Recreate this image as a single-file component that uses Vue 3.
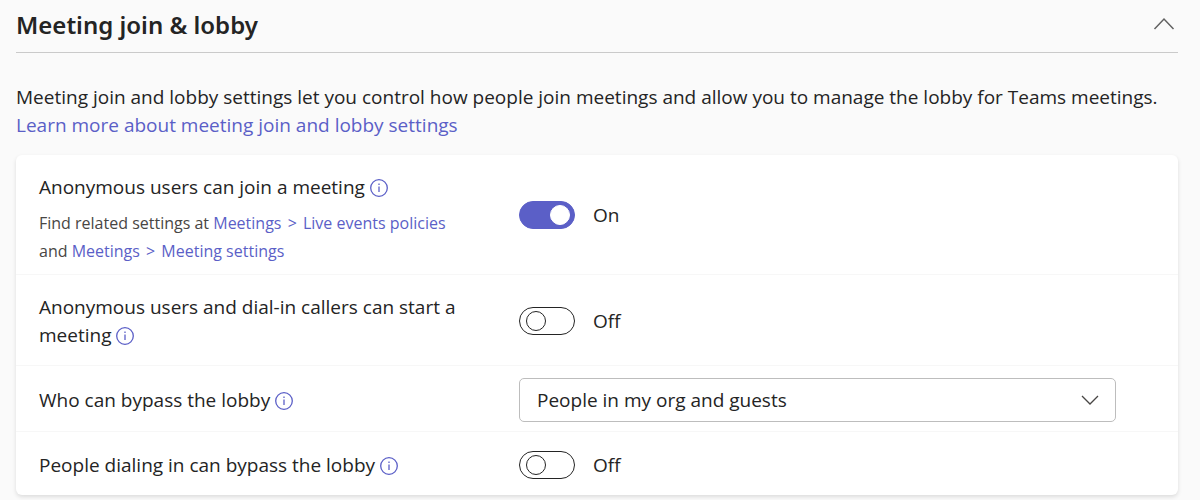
<script setup>
import { ref } from 'vue'

const expanded = ref(true)
const bypass = ref('org-guests')
const rows = ref([
  {
    id: 'anon-join',
    label: 'Anonymous users can join a meeting',
    type: 'switch',
    on: true,
    related: true
  },
  { id: 'anon-start', label: 'Anonymous users and dial-in callers can start a meeting', type: 'switch', on: false },
  { id: 'bypass', label: 'Who can bypass the lobby', type: 'select' },
  { id: 'dial-bypass', label: 'People dialing in can bypass the lobby', type: 'switch', on: false }
])
</script>

<template>
  <main class="panel">
    <header class="header">
      <h2 class="title">Meeting join &amp; lobby</h2>
      <button
        class="collapse"
        type="button"
        aria-label="Toggle section"
        :aria-expanded="expanded"
        @click="expanded = !expanded"
      >
        <svg width="22" height="14" viewBox="0 0 22 14" aria-hidden="true">
          <path d="M1.5 12 L11 2 L20.500 12" />
        </svg>
      </button>
    </header>

    <template v-if="expanded">
      <p class="intro">
        Meeting join and lobby settings let you control how people join meetings and allow you to manage the lobby for
        Teams meetings. <a class="more" href="#">Learn more about meeting join and lobby settings</a>
      </p>

      <section class="card">
        <div v-for="row in rows" :key="row.id" class="row" :class="'row-' + row.type">
          <div class="text">
            <div class="name">
              <label :for="row.id">{{ row.label }}</label>&nbsp;<button class="info" type="button" :aria-label="'About: ' + row.label">
                <svg width="18" height="18" viewBox="0 0 18 18" aria-hidden="true">
                  <circle cx="9" cy="9" r="8.300" />
                  <path d="M9 7.600 V13" />
                  <path d="M9 4.500 V6" />
                </svg>
              </button>
            </div>
            <p v-if="row.related" class="related">
              Find related settings at <a href="#">Meetings <span class="sep">&gt;</span> Live events policies</a> and
              <a href="#">Meetings <span class="sep">&gt;</span> Meeting settings</a>
            </p>
          </div>

          <div v-if="row.type === 'switch'" class="control">
            <input :id="row.id" v-model="row.on" class="switch" type="checkbox" role="switch" />
            <span class="state">{{ row.on ? 'On' : 'Off' }}</span>
          </div>
          <div v-else class="control dropdown">
            <select :id="row.id" v-model="bypass">
              <option value="org-guests">People in my org and guests</option>
            </select>
            <svg class="chevron" width="18" height="10" viewBox="0 0 18 10" aria-hidden="true">
              <path d="M1 1 L9 9 L17 1" />
            </svg>
          </div>
        </div>
      </section>
    </template>
  </main>
</template>

<style>
html {
  background: #fafafa;
}
</style>

<style scoped>
.panel {
  padding: 0 22px 5px 16px;
  color: #242424;
  font-family: 'Open Sans', 'Noto Sans', sans-serif;
  font-size: 19px;
  line-height: 28px;
}

a {
  color: #5b5fc7;
  text-decoration: none;
}

button {
  padding: 0;
  border: 0;
  background: none;
  cursor: pointer;
}

.header {
  display: flex;
  align-items: center;
  justify-content: space-between;
  height: 52px;
  padding-right: 3px;
  border-bottom: 1px solid #cacaca;
}

.title {
  margin: 0;
  padding-bottom: 2px;
  font-family: 'Noto Sans', 'Open Sans', sans-serif;
  font-size: 24px;
  font-weight: 600;
  line-height: 36px;
}

.collapse {
  padding-bottom: 4px;
}

.collapse svg {
  display: block;
  fill: none;
  stroke: #616161;
  stroke-width: 1.5;
}

.intro {
  margin: 30px 0 16px;
}

.more {
  display: block;
}

.card {
  border-radius: 6px;
  background: #fff;
  box-shadow: 0 2px 4px rgba(0, 0, 0, 0.12);
}

.row {
  display: grid;
  grid-template-columns: 424px 1fr;
  column-gap: 56px;
  align-items: center;
  padding: 18px 62px 16px 23px;
  border-bottom: 1px solid #f7f7f7;
}

.row:first-child {
  padding-top: 9px;
  padding-bottom: 9px;
}

.row:first-child .text {
  padding-top: 9px;
}

.row:last-child {
  padding-top: 19px;
  border-bottom: 0;
}

.row-select {
  padding-top: 12px;
  padding-bottom: 9px;
}

.info {
  display: inline-block;
  height: 18px;
  line-height: 18px;
  vertical-align: -3px;
}

.info svg {
  display: block;
  fill: none;
  stroke: #5b5fc7;
  stroke-width: 1.3;
}

.related {
  margin: 8px 0 0;
  color: #484644;
  font-size: 16px;
}

.sep {
  padding: 0 2px;
}

.control {
  display: flex;
  align-items: center;
  gap: 18px;
}

.switch {
  display: flex;
  align-items: center;
  box-sizing: border-box;
  width: 56px;
  height: 28px;
  margin: 0;
  padding: 0 6px;
  border: 1px solid #242424;
  border-radius: 14px;
  appearance: none;
  cursor: pointer;
}

.switch::before {
  box-sizing: border-box;
  width: 20px;
  height: 20px;
  border: 1px solid #242424;
  border-radius: 50%;
  content: '';
}

.switch:checked {
  justify-content: flex-end;
  padding: 0 4px;
  border-color: #5b5fc7;
  background: #5b5fc7;
}

.switch:checked::before {
  border-color: #fff;
  background: #fff;
}

.dropdown {
  position: relative;
}

.dropdown select {
  box-sizing: border-box;
  width: 100%;
  height: 44px;
  padding: 0 48px 0 17px;
  border: 1px solid #bdbdbd;
  border-radius: 5px;
  appearance: none;
  background: #fff;
  color: inherit;
  font: inherit;
}

.chevron {
  position: absolute;
  right: 17px;
  fill: none;
  stroke: #484644;
  stroke-width: 1.3;
  pointer-events: none;
}
</style>
